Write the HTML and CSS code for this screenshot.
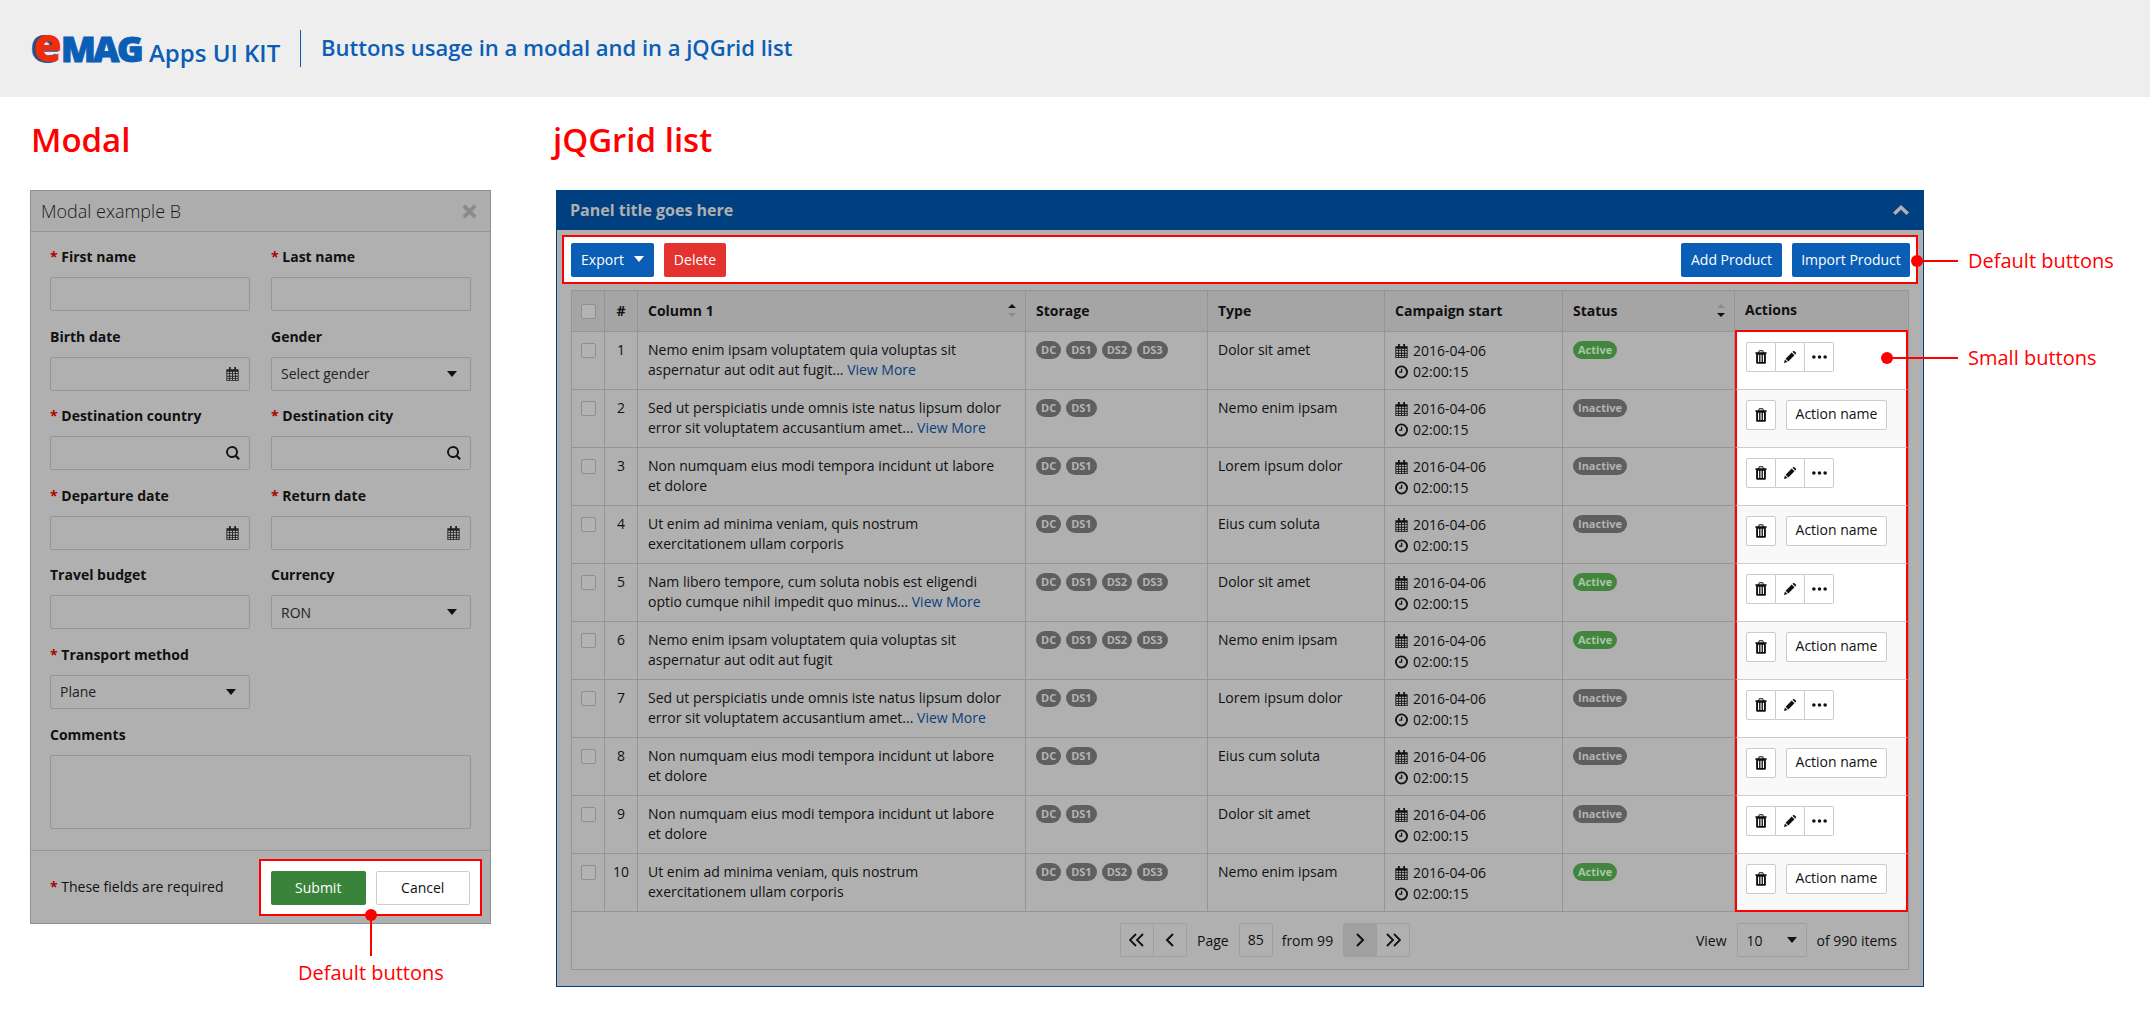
FILE: index.html
```html
<!DOCTYPE html>
<html lang="en">
<head>
    <meta charset="UTF-8">
    <title>Buttons usage in a modal and in a jQGrid list</title>
    <link rel="stylesheet" href="styles.css">
</head>
<body>
    <svg class="icon-defs" width="0" height="0">
        <defs>
            <symbol id="i-trash" viewBox="0 0 16 18"><path d="M5.500 0h5L12 2.500h3.500v2H14.500V16.500a1.500 1.500 0 0 1-1.500 1.500H3a1.500 1.500 0 0 1-1.500-1.500V4.500H.5v-2H4zM6 1.300 5.500 2.500h5L10 1.300zM4 6v9.500h1.500V6zm3.250 0v9.500h1.500V6zM10.500 6v9.500H12V6z" fill-rule="evenodd"/></symbol>
            <symbol id="i-pencil" viewBox="0 0 16 16"><path d="M0 16l1.200-4.800 3.600 3.600zM2.100 10.200 10.300 2l3.700 3.700-8.200 8.200zM11.300 1l.5-.5a1.700 1.700 0 0 1 2.400 0l1.300 1.300a1.700 1.700 0 0 1 0 2.400l-.5.500z"/></symbol>
            <symbol id="i-dots" viewBox="0 0 16 4"><circle cx="2" cy="2" r="1.900"/><circle cx="8" cy="2" r="1.900"/><circle cx="14" cy="2" r="1.900"/></symbol>
            <symbol id="i-cal" viewBox="0 0 14 16"><path d="M3 0h2v2.500h4V0h2v2.500h3V16H0V2.500h3zM1 5.500V7h2.200V5.500zm3.200 0V7h2.300V5.500zm3.300 0V7h2.300V5.500zm3.300 0V7H13V5.500zM1 8v2h2.200V8zm3.200 0v2h2.300V8zm3.300 0v2h2.300V8zm3.300 0v2H13V8zM1 11v1.500h2.200V11zm3.200 0v1.500h2.300V11zm3.300 0v1.500h2.300V11zm3.300 0v1.500H13V11zM1 13.500V15h2.200v-1.500zm3.200 0V15h2.300v-1.500zm3.300 0V15h2.300v-1.500zm3.300 0V15H13v-1.500z" fill-rule="evenodd"/></symbol>
            <symbol id="i-clock" viewBox="0 0 14 14"><path d="M7 0a7 7 0 1 1 0 14A7 7 0 0 1 7 0zm0 2a5 5 0 1 0 0 10A5 5 0 0 0 7 2zm.800 1.500v4.300H4.500V6.400h1.900V3.500z" fill-rule="evenodd"/></symbol>
            <symbol id="i-search" viewBox="0 0 14 14"><path d="M6 0a6 6 0 0 1 4.900 9.400l3 3-1.500 1.600-3-3A6 6 0 1 1 6 0zm0 2a4 4 0 1 0 0 8 4 4 0 0 0 0-8z" fill-rule="evenodd"/></symbol>
            <symbol id="i-times" viewBox="0 0 14 14"><path d="M3 .5 7 4.500 11 .5 13.500 3 9.500 7l4 4-2.500 2.500-4-4-4 4L.5 11l4-4-4-4z"/></symbol>
            <symbol id="i-up" viewBox="0 0 16 10"><path d="M8 0l8 7.500L13.500 10 8 4.800 2.500 10 0 7.500z"/></symbol>
            <symbol id="i-first" viewBox="0 0 16 16"><path d="M7 2 1 8l6 6M14 2 8 8l6 6" fill="none" stroke="currentColor" stroke-width="1.800"/></symbol>
            <symbol id="i-prev" viewBox="0 0 16 16"><path d="M11 2 5 8l6 6" fill="none" stroke="currentColor" stroke-width="2"/></symbol>
            <symbol id="i-next" viewBox="0 0 16 16"><path d="M5 2l6 6-6 6" fill="none" stroke="currentColor" stroke-width="2"/></symbol>
            <symbol id="i-last" viewBox="0 0 16 16"><path d="M2 2l6 6-6 6M9 2l6 6-6 6" fill="none" stroke="currentColor" stroke-width="1.800"/></symbol>
        </defs>
    </svg>

    <header class="topbar">
        <div class="logo"><span class="logo-e">e</span><span class="logo-mag">MAG</span></div>
        <div class="kit-name">Apps UI KIT</div>
        <h1 class="page-title">Buttons usage in a modal and in a jQGrid list</h1>
    </header>

    <main class="sections">
        <section class="modal-section">
            <h2 class="section-title">Modal</h2>
            <div class="modal">
                <div class="modal-head">
                    <span>Modal example B</span>
                    <svg class="modal-close"><use href="#i-times"/></svg>
                </div>
                <div class="modal-body">
                    <div class="field"><label><b>*</b> First name</label><div class="input"></div></div>
                    <div class="field"><label><b>*</b> Last name</label><div class="input"></div></div>
                    <div class="field"><label>Birth date</label><div class="input"><svg class="in-icon cal"><use href="#i-cal"/></svg></div></div>
                    <div class="field"><label>Gender</label><div class="input select">Select gender<i class="caret"></i></div></div>
                    <div class="field"><label><b>*</b> Destination country</label><div class="input"><svg class="in-icon"><use href="#i-search"/></svg></div></div>
                    <div class="field"><label><b>*</b> Destination city</label><div class="input"><svg class="in-icon"><use href="#i-search"/></svg></div></div>
                    <div class="field"><label><b>*</b> Departure date</label><div class="input"><svg class="in-icon cal"><use href="#i-cal"/></svg></div></div>
                    <div class="field"><label><b>*</b> Return date</label><div class="input"><svg class="in-icon cal"><use href="#i-cal"/></svg></div></div>
                    <div class="field"><label>Travel budget</label><div class="input"></div></div>
                    <div class="field"><label>Currency</label><div class="input select">RON<i class="caret"></i></div></div>
                    <div class="field"><label><b>*</b> Transport method</label><div class="input select">Plane<i class="caret"></i></div></div>
                    <div class="field"></div>
                    <div class="field wide"><label>Comments</label><div class="input textarea"></div></div>
                </div>
                <div class="modal-foot">
                    <span class="required-note"><b>*</b> These fields are required</span>
                    <div class="foot-buttons highlight">
                        <button class="btn btn-green">Submit</button>
                        <button class="btn btn-white">Cancel</button>
                        <span class="callout-down"><span class="callout-label">Default buttons</span></span>
                    </div>
                </div>
            </div>
        </section>

        <section class="grid-section">
            <h2 class="section-title">jQGrid list</h2>
            <div class="panel">
                <div class="panel-head">
                    <span>Panel title goes here</span>
                    <svg class="panel-toggle"><use href="#i-up"/></svg>
                </div>
                <div class="panel-body">
                    <div class="toolbar highlight">
                        <button class="btn btn-blue export">Export<i class="caret white"></i></button>
                        <button class="btn btn-red">Delete</button>
                        <button class="btn btn-blue add">Add Product</button>
                        <button class="btn btn-blue import">Import Product</button>
                        <span class="callout-right"><span class="callout-label">Default buttons</span></span>
                    </div>
                    <div class="grid-wrap">
                        <table class="grid">
                            <colgroup>
                                <col class="c-check"><col class="c-num"><col class="c-text"><col class="c-storage"><col class="c-type"><col class="c-date"><col class="c-status"><col class="c-actions">
                            </colgroup>
                            <thead>
                                <tr>
                                    <th class="center"><i class="check"></i></th>
                                    <th class="center">#</th>
                                    <th class="sortable">Column 1<span class="sort"><i class="up"></i><i class="down dim"></i></span></th>
                                    <th>Storage</th>
                                    <th>Type</th>
                                    <th>Campaign start</th>
                                    <th class="sortable">Status<span class="sort"><i class="up dim"></i><i class="down"></i></span></th>
                                    <th class="actions-head">Actions</th>
                                </tr>
                            </thead>
                            <tbody id="rows"></tbody>
                        </table>
                        <div class="pager">
                            <div class="pager-main">
                                <div class="btn-group">
                                    <span class="page-btn"><svg><use href="#i-first"/></svg></span>
                                    <span class="page-btn"><svg><use href="#i-prev"/></svg></span>
                                </div>
                                <span class="page-word">Page</span>
                                <span class="page-input">85</span>
                                <span class="page-from">from 99</span>
                                <div class="btn-group">
                                    <span class="page-btn active"><svg><use href="#i-next"/></svg></span>
                                    <span class="page-btn"><svg><use href="#i-last"/></svg></span>
                                </div>
                            </div>
                            <div class="pager-view">
                                <span>View</span>
                                <span class="view-select">10<i class="caret"></i></span>
                                <span>of 990 items</span>
                            </div>
                        </div>
                    </div>
                </div>
            </div>
        </section>
    </main>

    <script src="rows.js"></script>
</body>
</html>
```

FILE: rows.js
```js
// table rows for the grid
const rows = [
    ['Nemo enim ipsam voluptatem quia voluptas sit aspernatur aut odit aut fugit...', true, 4, 'Dolor sit amet', true],
    ['Sed ut perspiciatis unde omnis iste natus lipsum dolor error sit voluptatem accusantium amet...', true, 2, 'Nemo enim ipsam', false],
    ['Non numquam eius modi tempora incidunt ut labore et dolore', false, 2, 'Lorem ipsum dolor', false],
    ['Ut enim ad minima veniam, quis nostrum exercitationem ullam corporis', false, 2, 'Eius cum soluta', false],
    ['Nam libero tempore, cum soluta nobis est eligendi optio cumque nihil impedit quo minus...', true, 4, 'Dolor sit amet', true],
    ['Nemo enim ipsam voluptatem quia voluptas sit aspernatur aut odit aut fugit', false, 4, 'Nemo enim ipsam', true],
    ['Sed ut perspiciatis unde omnis iste natus lipsum dolor error sit voluptatem accusantium amet...', true, 2, 'Lorem ipsum dolor', false],
    ['Non numquam eius modi tempora incidunt ut labore et dolore', false, 2, 'Eius cum soluta', false],
    ['Non numquam eius modi tempora incidunt ut labore et dolore', false, 2, 'Dolor sit amet', false],
    ['Ut enim ad minima veniam, quis nostrum exercitationem ullam corporis', false, 4, 'Nemo enim ipsam', true]
];

const storageNames = ['DC', 'DS1', 'DS2', 'DS3'];

function icon(name, cls) {
    return '<svg class="' + cls + '"><use href="#i-' + name + '"/></svg>';
}

const tbody = document.getElementById('rows');

rows.forEach(function(row, i) {
    const more = row[1] ? ' <a href="#">View More</a>' : '';
    const tags = storageNames.slice(0, row[2]).map(function(name) {
        return '<span class="tag">' + name + '</span>';
    }).join('');
    const status = row[4]
        ? '<span class="tag status-active">Active</span>'
        : '<span class="tag">Inactive</span>';

    // odd rows get the icon group, even rows a delete button and a named action
    let actions;
    if (i % 2 === 0) {
        actions = '<div class="small-group">'
            + '<span class="small-btn">' + icon('trash', 'ic-trash') + '</span>'
            + '<span class="small-btn">' + icon('pencil', 'ic-pencil') + '</span>'
            + '<span class="small-btn">' + icon('dots', 'ic-dots') + '</span>'
            + '</div>';
    } else {
        actions = '<div class="small-row">'
            + '<span class="small-btn solo">' + icon('trash', 'ic-trash') + '</span>'
            + '<span class="small-btn named">Action name</span>'
            + '</div>';
    }
    if (i === 0) {
        actions += '<span class="callout-small"><span class="callout-label">Small buttons</span></span>';
    }

    const tr = document.createElement('tr');
    tr.innerHTML = '<td class="center"><i class="check"></i></td>'
        + '<td class="center">' + (i + 1) + '</td>'
        + '<td class="text-cell">' + row[0] + more + '</td>'
        + '<td><div class="tags">' + tags + '</div></td>'
        + '<td>' + row[3] + '</td>'
        + '<td class="date-cell"><div>' + icon('cal', 'ic-cal') + '2016-04-06</div><div>' + icon('clock', 'ic-clock') + '02:00:15</div></td>'
        + '<td><div class="tags">' + status + '</div></td>'
        + '<td class="actions">' + actions + '</td>';
    tbody.appendChild(tr);
});
```

FILE: styles.css
```css
:root {
    --overlay: #b0b0b0;
    --overlay-line: #959595;
    --overlay-head: #a5a5a5;
    --red: #ff0000;
    --star: #b00000;
    --blue: #0a5eb6;
    --navy: #004080;
}

* {
    box-sizing: border-box;
    margin: 0;
    padding: 0;
}

body {
    font-family: 'Open Sans', sans-serif;
    font-size: 14px;
    color: #111111;
    background-color: #ffffff;
    overflow-x: hidden;
}

.icon-defs {
    position: absolute;
}

svg {
    fill: currentColor;
}

/* top bar */
.topbar {
    height: 97px;
    background-color: #eeeeee;
    display: flex;
    align-items: flex-start;
    padding-left: 31px;
}

.logo {
    width: 118px;
    height: 40px;
    margin-top: 19px;
    display: flex;
    align-items: baseline;
    font-weight: 800;
    line-height: 50px;
    white-space: nowrap;
}

.logo-e {
    color: #ee2d0a;
    font-size: 47px;
    letter-spacing: -1px;
    text-shadow: -2px 1px 0 var(--blue), -3px 0 0 var(--blue);
    margin-left: 2px;
}

.logo-mag {
    color: var(--blue);
    font-size: 36px;
    letter-spacing: -2.500px;
    -webkit-text-stroke: 1px var(--blue);
}

.kit-name {
    width: 151px;
    margin-top: 37px;
    color: var(--blue);
    font-size: 24px;
    line-height: 32px;
    font-weight: 600;
}

.page-title {
    margin-top: 30px;
    height: 37px;
    padding-left: 20px;
    border-left: 1px solid var(--blue);
    color: var(--blue);
    font-size: 22px;
    line-height: 34px;
    font-weight: 600;
}

/* page sections */
.sections {
    display: flex;
    padding-left: 30px;
    gap: 65px;
}

.section-title {
    height: 93px;
    padding-top: 18px;
    padding-left: 1px;
    color: var(--red);
    font-size: 33px;
    line-height: 50px;
    font-weight: 600;
}

.grid-section .section-title {
    padding-left: 0;
    margin-left: -3px;
}

.modal-section {
    width: 461px;
}

.grid-section {
    width: 1368px;
}

/* modal */
.modal {
    height: 734px;
    border: 1px solid #909090;
    background-color: var(--overlay);
    display: flex;
    flex-direction: column;
}

.modal-head {
    height: 41px;
    background-color: #adadad;
    border-bottom: 1px solid var(--overlay-line);
    padding: 0 13px 0 10px;
    display: flex;
    align-items: center;
    justify-content: space-between;
    font-size: 18px;
    font-weight: 300;
    color: #1a1a1a;
}

.modal-close {
    width: 15px;
    height: 15px;
    color: #8a8a8a;
}

.modal-body {
    flex: 1;
    padding: 15px 19px 0;
    display: grid;
    grid-template-columns: 200px 200px;
    grid-auto-rows: 79.600px;
    column-gap: 21px;
    align-content: start;
}

.field label {
    display: block;
    height: 30px;
    font-size: 14px;
    line-height: 20px;
    font-weight: 700;
    color: #111111;
}

.field label b,
.required-note b {
    color: var(--star);
    font-weight: 700;
}

.field.wide {
    grid-column: 1 / 3;
}

.input {
    height: 34px;
    border: 1px solid var(--overlay-line);
    border-radius: 2px;
    padding: 0 9px;
    display: flex;
    align-items: center;
    justify-content: flex-end;
}

.input.select {
    justify-content: space-between;
    font-size: 14px;
    color: #222222;
}

.input.textarea {
    height: 74px;
}

.in-icon {
    width: 14px;
    height: 14px;
    color: #151515;
}

.in-icon.cal {
    width: 13px;
    height: 14px;
    color: #222222;
    margin-right: 1px;
}

.caret {
    width: 0;
    height: 0;
    border-left: 5.500px solid transparent;
    border-right: 5.500px solid transparent;
    border-top: 6px solid #111111;
    margin-right: 4px;
}

.caret.white {
    border-top-color: #ffffff;
    margin-left: 10px;
    margin-right: 0;
}

.modal-foot {
    height: 73px;
    border-top: 1px solid var(--overlay-line);
    padding: 8px 8px 7px 19px;
    display: flex;
    justify-content: space-between;
    align-items: flex-start;
}

.required-note {
    font-size: 14px;
    line-height: 20px;
    color: #111111;
    margin-top: 18px;
}

.highlight {
    position: relative;
    background-color: #ffffff;
    border: 2px solid var(--red);
}

.foot-buttons {
    width: 223px;
    height: 57px;
    padding: 10px 10px 0;
    display: flex;
    gap: 10px;
}

/* buttons */
.btn {
    height: 34px;
    border: 1px solid transparent;
    border-radius: 2px;
    padding-bottom: 2px;
    font-family: inherit;
    font-size: 14px;
    color: #ffffff;
    display: inline-flex;
    align-items: center;
    justify-content: center;
}

.btn-green {
    width: 95px;
    background-color: #3a833a;
}

.btn-white {
    width: 95px;
    background-color: #ffffff;
    border-color: #cccccc;
    color: #111111;
}

.btn-blue {
    background-color: var(--blue);
}

.btn-red {
    width: 62px;
    background-color: #e4322f;
}

/* callouts */
.callout-label {
    position: absolute;
    color: var(--red);
    font-size: 20px;
    line-height: 24px;
    white-space: nowrap;
}

.callout-down {
    position: absolute;
    left: 104px;
    top: 48px;
    width: 12px;
    height: 12px;
    border-radius: 50%;
    background-color: var(--red);
}

.callout-down::after {
    content: "";
    position: absolute;
    left: 5px;
    top: 10px;
    width: 2px;
    height: 37px;
    background-color: var(--red);
}

.callout-down .callout-label {
    left: -67px;
    top: 52px;
}

.callout-right,
.callout-small {
    position: absolute;
    width: 12px;
    height: 12px;
    border-radius: 50%;
    background-color: var(--red);
}

.callout-right {
    right: -7px;
    top: 18px;
}

.callout-small {
    left: 144px;
    top: 20px;
}

.callout-right::after,
.callout-small::after {
    content: "";
    position: absolute;
    top: 5px;
    left: 10px;
    height: 2px;
    background-color: var(--red);
}

.callout-right::after {
    width: 37px;
}

.callout-small::after {
    width: 67px;
}

.callout-right .callout-label {
    left: 57px;
    top: -6px;
}

.callout-small .callout-label {
    left: 87px;
    top: -6px;
}

/* panel */
.panel {
    height: 797px;
    background-color: var(--overlay);
    border: 1px solid var(--navy);
    border-top: none;
}

.panel-head {
    height: 40px;
    background-color: var(--navy);
    padding: 0 14px 0 13px;
    display: flex;
    align-items: center;
    justify-content: space-between;
    color: #b0b0b0;
    font-size: 16px;
    font-weight: 700;
}

.panel-toggle {
    width: 16px;
    height: 10px;
    color: #b0b0b0;
}

.panel-body {
    padding: 5px 14px 0 5px;
}

.toolbar {
    width: 1356px;
    height: 49px;
    padding: 6px 0 0 7px;
    display: flex;
    gap: 10px;
}

.toolbar .add {
    width: 101px;
    margin-left: auto;
}

.toolbar .import {
    width: 118px;
    margin-right: 6px;
}

.export {
    width: 83px;
}

.grid-wrap {
    margin: 6px 0 0 9px;
    width: 1338px;
    height: 680px;
    border: 1px solid var(--overlay-line);
}

/* grid */
.grid {
    width: 1336px;
    table-layout: fixed;
    border-collapse: separate;
    border-spacing: 0;
}

.c-check { width: 33px; }
.c-num { width: 33px; }
.c-text { width: 388px; }
.c-storage { width: 182px; }
.c-type { width: 177px; }
.c-date { width: 178px; }
.c-status { width: 172px; }
.c-actions { width: 173px; }

.grid th {
    height: 41px;
    background-color: var(--overlay-head);
    border-right: 1px solid var(--overlay-line);
    border-bottom: 1px solid var(--overlay-line);
    padding: 0 10px 2px;
    text-align: left;
    font-size: 14px;
    font-weight: 700;
    color: #111111;
}

.grid th:last-child {
    border-right: none;
}

.grid td {
    height: 58px;
    border-right: 1px solid var(--overlay-line);
    border-bottom: 1px solid var(--overlay-line);
    padding: 8px 10px 0;
    vertical-align: top;
    line-height: 20px;
    color: #111111;
}

.grid td.text-cell {
    padding-right: 20px;
}

.grid th.center,
.grid td.center {
    padding-left: 0;
    padding-right: 0;
    text-align: center;
}

.check {
    display: inline-block;
    width: 15px;
    height: 15px;
    background-color: #b3b3b3;
    border: 1px solid #8f8f8f;
    border-radius: 2px;
    vertical-align: middle;
}

.grid td .check {
    display: block;
    margin-left: 9px;
    margin-top: 3px;
}

.grid td a {
    color: #0a3f7d;
    text-decoration: none;
}

.grid th.sortable {
    position: relative;
}

.sort {
    position: absolute;
    right: 9px;
    top: 13px;
    display: flex;
    flex-direction: column;
    gap: 5px;
}

.sort i {
    width: 0;
    height: 0;
    border-left: 4px solid transparent;
    border-right: 4px solid transparent;
}

.sort .up {
    border-bottom: 4px solid #111111;
}

.sort .down {
    border-top: 4px solid #111111;
}

.sort .up.dim {
    border-bottom-color: #8b8b8b;
}

.sort .down.dim {
    border-top-color: #8b8b8b;
}

.tags {
    display: flex;
    gap: 5px;
    padding-top: 1px;
}

.tag {
    min-width: 25px;
    height: 18px;
    padding: 0 5px;
    border-radius: 9px;
    background-color: #5f5f5f;
    color: #b4b4b4;
    font-size: 11px;
    line-height: 18px;
    font-weight: 700;
    text-align: center;
}

.tag.status-active {
    background-color: #43853f;
    color: #a8c8a8;
}

.grid td.date-cell {
    padding-top: 8px;
    line-height: 21px;
}

.ic-cal,
.ic-clock {
    width: 13px;
    height: 14px;
    margin-right: 5px;
    vertical-align: -2px;
}

/* actions column, boxed in red */
.grid th.actions-head {
    border-bottom: 2px solid var(--red);
}

.grid td.actions {
    position: relative;
    padding: 10px 0 0 9px;
    background-color: #ffffff;
    border-left: 2px solid var(--red);
    border-right: 2px solid var(--red);
    border-bottom: 1px solid #cccccc;
}

.grid tbody tr:nth-child(even) td.actions {
    background-color: #f9f9f9;
}

.grid tbody tr:last-child td.actions {
    border-bottom: 2px solid var(--red);
}

.small-group,
.small-row {
    display: flex;
    height: 30px;
}

.small-row {
    gap: 10px;
}

.small-btn {
    width: 29px;
    height: 30px;
    background-color: #ffffff;
    border: 1px solid #cccccc;
    border-left: none;
    display: flex;
    align-items: center;
    justify-content: center;
    color: #111111;
    font-size: 14px;
}

.small-btn:first-child {
    width: 30px;
    border-left: 1px solid #cccccc;
    border-radius: 2px 0 0 2px;
}

.small-btn:last-child {
    border-radius: 0 2px 2px 0;
}

.small-btn.solo {
    border-radius: 2px;
}

.small-btn.named {
    width: 101px;
    padding-bottom: 2px;
    border-left: 1px solid #cccccc;
    border-radius: 2px;
}

.ic-trash {
    width: 12px;
    height: 14px;
}

.ic-pencil {
    width: 12px;
    height: 12px;
}

.ic-dots {
    width: 15px;
    height: 4px;
}

/* pager */
.pager {
    height: 58px;
    display: flex;
    align-items: flex-start;
    padding-top: 11px;
}

.pager-main {
    margin-left: 548px;
    display: flex;
    align-items: center;
    height: 34px;
}

.btn-group {
    width: 67px;
    display: flex;
    border: 1px solid #9f9f9f;
    border-radius: 2px;
}

.page-btn {
    flex: 1;
    height: 32px;
    display: flex;
    align-items: center;
    justify-content: center;
    border-right: 1px solid #9f9f9f;
    color: #111111;
}

.page-btn:last-child {
    border-right: none;
}

.page-btn.active {
    background-color: #a0a0a0;
}

.page-btn svg {
    width: 16px;
    height: 16px;
}

.page-word {
    margin: 0 10px;
}

.page-input {
    width: 34px;
    height: 34px;
    border: 1px solid #9f9f9f;
    border-radius: 2px;
    line-height: 32px;
    text-align: center;
}

.page-from {
    margin: 0 10px 0 9px;
}

.pager-view {
    margin-left: auto;
    margin-right: 11px;
    display: flex;
    align-items: center;
    gap: 10px;
    height: 34px;
}

.view-select {
    width: 70px;
    height: 34px;
    border: 1px solid #9f9f9f;
    border-radius: 2px;
    padding: 0 9px;
    display: flex;
    align-items: center;
    justify-content: space-between;
}

.view-select .caret {
    margin-right: 0;
}
```
